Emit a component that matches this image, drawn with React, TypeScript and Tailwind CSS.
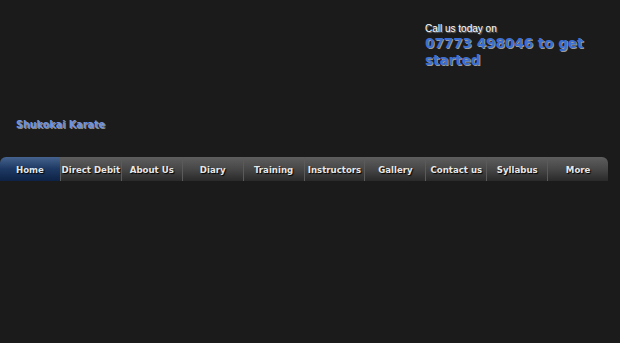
const navItems = [
  'Home',
  'Direct Debit',
  'About Us',
  'Diary',
  'Training',
  'Instructors',
  'Gallery',
  'Contact us',
  'Syllabus',
  'More',
];

export default function App() {
  return (
    <div className="w-[620px] h-[343px] overflow-hidden bg-[#1b1b1b]">
      {/* Header: call to action */}
      <div className="pl-[425px] pt-[23px]">
        <p className="font-['Liberation_Sans',Arial,sans-serif] text-[10px] leading-[12px] text-white [text-shadow:1px_1px_1px_#7a7a7a]">
          Call us today on
        </p>
        <p className="w-[170px] font-['DejaVu_Sans',Verdana,sans-serif] font-bold text-[13.5px] leading-[17px] text-[#3d6fd0] [text-shadow:1px_1px_0_#9a9a9a]">
          07773 498046 to get started
        </p>
      </div>

      {/* Site title */}
      <div className="pl-4 mt-[50px]">
        <h1 className="font-['DejaVu_Sans',Verdana,sans-serif] font-bold text-[9.6px] leading-[12px] text-[#6f93de] [text-shadow:1px_1px_0_#8a8a8a]">
          Shukokai Karate
        </h1>
      </div>

      {/* Main navigation */}
      <nav className="mt-[26px] flex w-[608px] h-[24px]">
        {navItems.map((item, i) => (
          <a
            key={item}
            className={
              i === 0
                ? 'flex-1 flex items-center justify-center rounded-tl-[6px] bg-gradient-to-b from-[#45638e] via-[#1d3963] to-[#0e2346] text-[#dfe6f0]'
                : i === navItems.length - 1
                  ? 'flex-1 flex items-center justify-center rounded-tr-[6px] border-l border-[#5a5a5a] bg-gradient-to-b from-[#5e5e5e] via-[#474747] to-[#2a2a2a] text-[#e6e6e6]'
                  : 'flex-1 flex items-center justify-center border-l border-[#5a5a5a] bg-gradient-to-b from-[#5e5e5e] via-[#474747] to-[#2a2a2a] text-[#e6e6e6]'
            }
          >
            <span className="font-['DejaVu_Sans',Verdana,sans-serif] font-bold text-[8.6px] leading-none pt-[3px] [text-shadow:1px_1px_1px_#000]">
              {item}
            </span>
          </a>
        ))}
      </nav>
    </div>
  );
}
